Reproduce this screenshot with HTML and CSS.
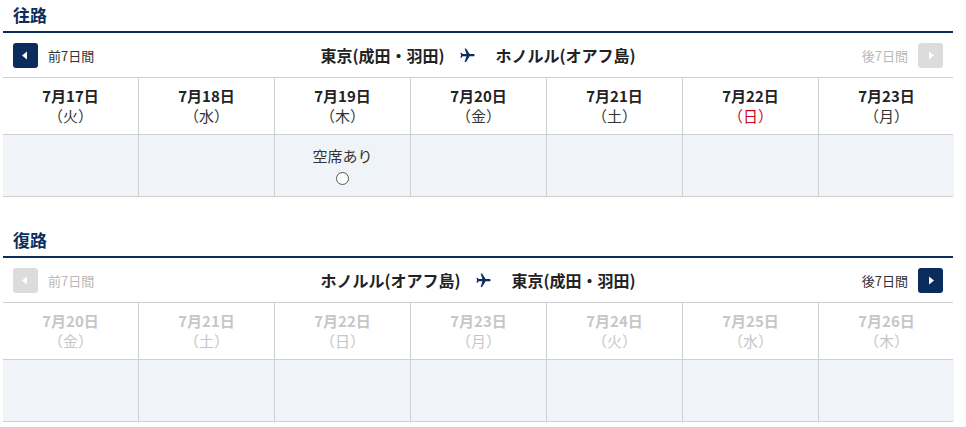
FILE: index.html
```html
<!DOCTYPE html>
<html lang="ja">
<head>
<meta charset="utf-8">
<title>フライト選択</title>
<link rel="stylesheet" href="styles.css">
</head>
<body>
<div class="page">
  <section class="leg">
    <h2 class="leg-title">往路</h2>
    <div class="nav">
      <div class="nav-side nav-left">
        <span class="btn"><svg width="25" height="25" viewBox="0 0 25 25"><path d="M14 8.5v8l-5-4z" fill="#fff"/></svg></span>
        <span class="nav-label">前7日間</span>
      </div>
      <div class="route">
        <span>東京(成田・羽田)</span>
        <svg class="plane" width="17" height="17" viewBox="0 0 24 24"><path transform="rotate(90 12 12)" d="M21 16v-2l-8-5V3.5c0-.83-.67-1.5-1.5-1.5S10 2.670 10 3.5V9l-8 5v2l8-2.5V19l-2 1.5V22l3.5-1 3.5 1v-1.5L13 19v-5.5l8 2.5z" fill="#0b2d5e"/></svg>
        <span>ホノルル(オアフ島)</span>
      </div>
      <div class="nav-side nav-right disabled">
        <span class="nav-label">後7日間</span>
        <span class="btn"><svg width="25" height="25" viewBox="0 0 25 25"><path d="M11 8.5v8l5-4z" fill="#fff"/></svg></span>
      </div>
    </div>
    <div class="grid head">
      <div class="cell"><b>7月17日</b><span>（火）</span></div>
      <div class="cell"><b>7月18日</b><span>（水）</span></div>
      <div class="cell"><b>7月19日</b><span>（木）</span></div>
      <div class="cell"><b>7月20日</b><span>（金）</span></div>
      <div class="cell"><b>7月21日</b><span>（土）</span></div>
      <div class="cell"><b>7月22日</b><span class="sun">（日）</span></div>
      <div class="cell"><b>7月23日</b><span>（月）</span></div>
    </div>
    <div class="grid body">
      <div class="cell"></div>
      <div class="cell"></div>
      <div class="cell"><span class="seat">空席あり</span><span class="circle"></span></div>
      <div class="cell"></div>
      <div class="cell"></div>
      <div class="cell"></div>
      <div class="cell"></div>
    </div>
  </section>

  <section class="leg leg2">
    <h2 class="leg-title">復路</h2>
    <div class="nav">
      <div class="nav-side nav-left disabled">
        <span class="btn"><svg width="25" height="25" viewBox="0 0 25 25"><path d="M14 8.5v8l-5-4z" fill="#fff"/></svg></span>
        <span class="nav-label">前7日間</span>
      </div>
      <div class="route">
        <span>ホノルル(オアフ島)</span>
        <svg class="plane" width="17" height="17" viewBox="0 0 24 24"><path transform="rotate(90 12 12)" d="M21 16v-2l-8-5V3.5c0-.83-.67-1.5-1.5-1.5S10 2.67 10 3.5V9l-8 5v2l8-2.5V19l-2 1.5V22l3.5-1 3.5 1v-1.5L13 19v-5.5l8 2.5z" fill="#0b2d5e"/></svg>
        <span>東京(成田・羽田)</span>
      </div>
      <div class="nav-side nav-right">
        <span class="nav-label">後7日間</span>
        <span class="btn"><svg width="25" height="25" viewBox="0 0 25 25"><path d="M11 8.5v8l5-4z" fill="#fff"/></svg></span>
      </div>
    </div>
    <div class="grid head muted">
      <div class="cell"><b>7月20日</b><span>（金）</span></div>
      <div class="cell"><b>7月21日</b><span>（土）</span></div>
      <div class="cell"><b>7月22日</b><span>（日）</span></div>
      <div class="cell"><b>7月23日</b><span>（月）</span></div>
      <div class="cell"><b>7月24日</b><span>（火）</span></div>
      <div class="cell"><b>7月25日</b><span>（水）</span></div>
      <div class="cell"><b>7月26日</b><span>（木）</span></div>
    </div>
    <div class="grid body">
      <div class="cell"></div>
      <div class="cell"></div>
      <div class="cell"></div>
      <div class="cell"></div>
      <div class="cell"></div>
      <div class="cell"></div>
      <div class="cell"></div>
    </div>
  </section>
</div>
</body>
</html>
```

FILE: styles.css
```css
* { box-sizing: border-box; }
html, body { margin: 0; padding: 0; background: #fff; }
body {
  font-family: "Noto Sans CJK JP", "Noto Sans", sans-serif;
  color: #222;
}
.page {
  margin-left: 3px;
  width: 950px;
}
.leg2 { margin-top: 28px; }
.leg-title {
  margin: 0;
  height: 33px;
  padding: 3px 10px 0;
  font-size: 17px;
  line-height: 24px;
  font-weight: 700;
  color: #0b2d5e;
  border-bottom: 2px solid #0b2d5e;
}
.nav {
  height: 45px;
  display: grid;
  grid-template-columns: 1fr auto 1fr;
  align-items: center;
  border-bottom: 1px solid #cfcfcf;
  padding: 0 10px;
}
.nav-side {
  display: flex;
  align-items: center;
  gap: 10px;
  font-size: 13px;
  color: #333;
}
.nav-right { justify-content: flex-end; }
.btn {
  width: 25px;
  height: 25px;
  border-radius: 3px;
  background: #0b2d5e;
  display: block;
}
.btn svg { display: block; }
.disabled { color: #b9b9b9; }
.disabled .btn { background: #dcdcdc; }
.route {
  display: flex;
  align-items: center;
  font-size: 16px;
  font-weight: 700;
  color: #222;
}
.plane { margin: 0 20px 0 14px; display: block; }
.grid {
  display: grid;
  grid-template-columns: 135px repeat(6, 136px);
  border-bottom: 1px solid #cfcfcf;
}
.grid .cell {
  border-left: 1px solid #cfcfcf;
  display: flex;
  flex-direction: column;
  align-items: center;
}
.grid .cell:first-child { border-left: none; }
.head .cell {
  height: 56px;
  justify-content: center;
  font-size: 15px;
  line-height: 20px;
  padding-bottom: 1px;
}
.head b { font-weight: 700; color: #222; }
.head span { color: #333; font-size: 15px; }
.head .sun { color: #d0021b; }
.muted b, .muted span { color: #c6c6c6; }
.body .cell {
  height: 61px;
  background: #f0f3f8;
  padding-top: 10px;
}
.seat {
  font-size: 15px;
  line-height: 22px;
  color: #333;
}
.circle {
  margin-top: 5px;
  width: 13px;
  height: 13px;
  border: 1px solid #555;
  border-radius: 50%;
  background: #fff;
}
```
